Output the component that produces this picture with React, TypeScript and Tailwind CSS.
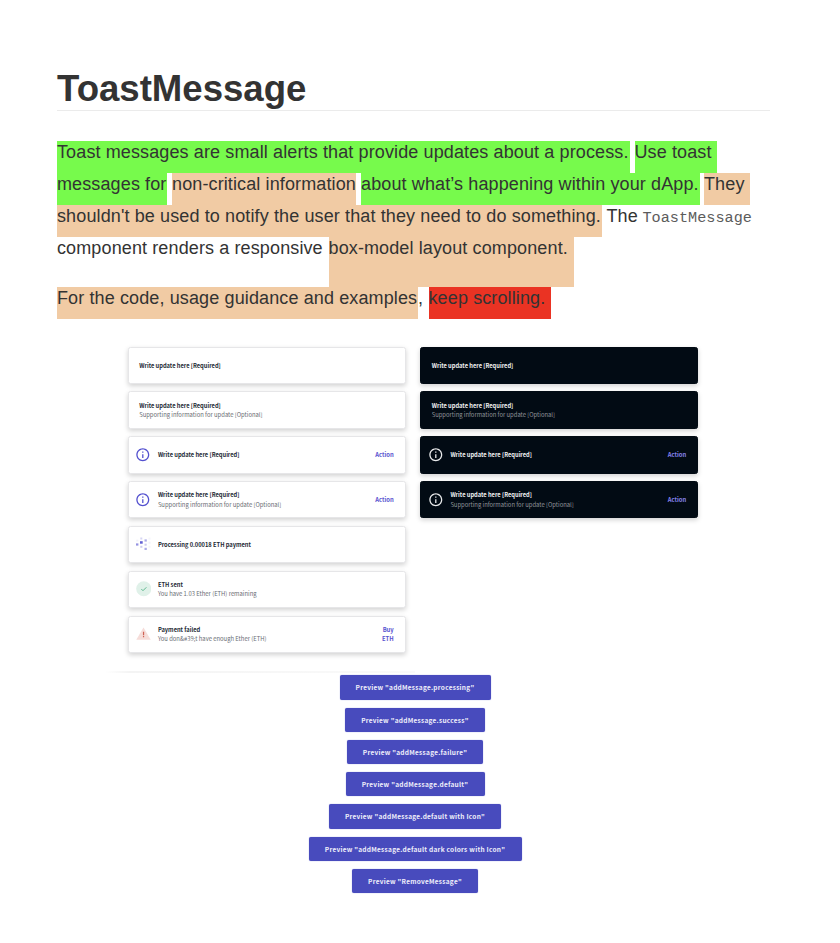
import type { ReactNode } from "react";

const GREEN = "bg-[#77fa4c]";
const PEACH = "bg-[#f1cba4]";
const RED = "bg-[#ea3323]";

function Mark({ children, className }: { children: ReactNode; className: string }) {
  return <span className={`block h-full shrink-0 whitespace-pre ${className}`}>{children}</span>;
}

function InfoIcon() {
  return (
    <svg viewBox="0 0 24 24" className="size-[15.600px] shrink-0 fill-current">
      <path d="M11 17h2v-6h-2v6zm1-15C6.480 2 2 6.480 2 12s4.480 10 10 10 10-4.480 10-10S17.520 2 12 2zm0 18c-4.410 0-8-3.590-8-8s3.590-8 8-8 8 3.590 8 8-3.590 8-8 8zM11 9h2V7h-2v2z" />
    </svg>
  );
}

function ProcessingIcon() {
  return (
    <svg viewBox="0 0 15 15" className="size-[15px] shrink-0" fill="#5a57d2">
      <rect x="0" y="6.400" width="2.400" height="2.200" opacity=".65" />
      <rect x="4" y="4.200" width="2.700" height="2.500" opacity=".95" />
      <rect x="8.500" y="2.400" width="2.300" height="2.200" opacity=".5" />
      <rect x="4.300" y="0.500" width="2" height="2" opacity=".25" />
      <rect x="8.500" y="6.700" width="2.200" height="2" opacity=".3" />
      <rect x="8.500" y="10.800" width="2.300" height="2.200" opacity=".5" />
      <rect x="4.300" y="8.800" width="2.100" height="2" opacity=".3" />
      <rect x="0.300" y="2.700" width="2" height="1.800" opacity=".08" />
      <rect x="12.500" y="0.600" width="2" height="2" opacity=".06" />
      <rect x="12.500" y="4.700" width="2" height="2" opacity=".08" />
      <rect x="12.500" y="8.800" width="2" height="2" opacity=".06" />
    </svg>
  );
}

function SuccessIcon() {
  return (
    <svg viewBox="0 0 16 16" className="mt-[-1px] size-[15.500px] shrink-0">
      <circle cx="8" cy="8" r="7.800" fill="#e0f1e9" />
      <path d="M5.500 8.300 7.200 10l3.500-3.500" fill="none" stroke="#5bb78b" strokeWidth="1" />
    </svg>
  );
}

function FailureIcon() {
  return (
    <svg viewBox="0 0 16 14" className="mt-[-2px] h-[13px] w-[15px] shrink-0">
      <path d="M8 0.500 15.800 13.700H.2z" fill="#f6ddd9" />
      <path d="M7.400 5h1.300v3.800H7.400zM7.400 9.700h1.300V11H7.400z" fill="#cf6153" />
    </svg>
  );
}

interface ToastProps {
  dark?: boolean;
  icon?: ReactNode;
  title: string;
  body?: string;
  action?: ReactNode;
}

function Toast({ dark, icon, title, body, action }: ToastProps) {
  const tone = dark
    ? "bg-[#020b14] border-[#020b14] text-[#f1f2f3]"
    : "bg-white border-[#e6e6e8] text-[#232934]";
  return (
    <div
      className={`flex h-[37.400px] w-[278px] items-center rounded-[2.500px] border pr-[11px] shadow-[0_2px_5px_rgba(0,0,0,0.18)] ${tone} ${icon ? "pl-[6.600px]" : "pl-[10.500px]"}`}
    >
      {icon && (
        <div className={`mr-[6.600px] flex w-4 shrink-0 justify-center ${dark ? "text-[#e9eaeb]" : "text-[#5350cf]"}`}>
          {icon}
        </div>
      )}
      <div className="flex-1 text-[5.870px] leading-[9.300px] whitespace-nowrap">
        <div className="text-[5.720px] font-bold"><span>{title}</span></div>
        {body && (
          <div className={dark ? "text-[#90949a]" : "text-[#6a6d73]"}><span>{body}</span></div>
        )}
      </div>
      {action && (
        <div className={`pt-[2px] text-right text-[5.850px] leading-[8.900px] font-bold ${dark ? "text-[#8583eb]" : "text-[#5753cf]"}`}>
          {action}
        </div>
      )}
    </div>
  );
}

const REQUIRED = "Write update here [Required]";
const OPTIONAL = "Supporting information for update [Optional]";

function BasicToasts({ dark }: { dark?: boolean }) {
  return (
    <>
      <Toast dark={dark} title={REQUIRED} />
      <Toast dark={dark} title={REQUIRED} body={OPTIONAL} />
      <Toast dark={dark} icon={<InfoIcon />} title={REQUIRED} action="Action" />
      <Toast dark={dark} icon={<InfoIcon />} title={REQUIRED} body={OPTIONAL} action="Action" />
    </>
  );
}

const BUTTONS = [
  { label: 'Preview "addMessage.processing"', width: "w-[151px]" },
  { label: 'Preview "addMessage.success"', width: "w-[140px]" },
  { label: 'Preview "addMessage.failure"', width: "w-[136.500px]" },
  { label: 'Preview "addMessage.default"', width: "w-[139px]" },
  { label: 'Preview "addMessage.default with Icon"', width: "w-[172.500px]" },
  { label: 'Preview "addMessage.default dark colors with Icon"', width: "w-[213px]" },
  { label: 'Preview "RemoveMessage"', width: "w-[126.500px]" },
];

export default function App() {
  return (
    <main className="h-[943px] w-[840px] overflow-hidden bg-white pt-[64px] font-['Liberation_Sans',Arial,sans-serif] text-[#333]">
      <h1 className="ml-[57px] h-[47px] w-[713px] border-b border-[#ebebeb] text-[36.600px] leading-[50px] font-bold whitespace-nowrap">
        <span>ToastMessage</span>
      </h1>

      <div className="mt-[29.500px] ml-[57px] w-[720px] text-[18px] leading-[23px] tracking-[0.120px] whitespace-nowrap">
        <div className="flex h-8">
          <Mark className={`w-[572.500px] ${GREEN}`}>Toast messages are small alerts that provide updates about a process.</Mark>
          <Mark className={`ml-[5px] w-[82px] ${GREEN}`}>Use toast</Mark>
        </div>
        <div className="flex h-8">
          <Mark className={`w-[110px] ${GREEN}`}>messages for</Mark>
          <Mark className={`ml-[5px] w-[184px] ${PEACH}`}>non-critical information</Mark>
          <Mark className={`ml-[5px] w-[338.500px] ${GREEN}`}>about what’s happening within your dApp.</Mark>
          <Mark className={`ml-[4.500px] w-[46px] ${PEACH}`}>They</Mark>
        </div>
        <div className="flex h-[32.500px]">
          <Mark className={`w-[544.500px] ${PEACH}`}>shouldn't be used to notify the user that they need to do something.</Mark>
          <Mark className="ml-[5px] w-[36px]">The</Mark>
          <Mark className="pt-[2px] font-['Liberation_Mono',monospace] text-[15.200px] tracking-normal text-[#5c5c5c]">ToastMessage</Mark>
        </div>
        <div className="flex h-[50px]">
          <Mark className="w-[271.500px]">component renders a responsive</Mark>
          <Mark className={`w-[245px] ${PEACH}`}>box-model layout component.</Mark>
        </div>
        <div className="flex h-8">
          <Mark className={`w-[361px] ${PEACH}`}>For the code, usage guidance and examples</Mark>
          <Mark className="w-[10.500px]">,</Mark>
          <Mark className={`w-[122px] ${RED}`}>keep scrolling.</Mark>
        </div>
      </div>

      <div className="font-['Noto_Sans_CJK_JP','Noto_Sans_CJK_SC',sans-serif]">
        <section className="mt-[27.500px] ml-[127.700px] flex h-[324.500px] gap-[14.500px]">
          <div className="flex flex-col gap-[7.460px]">
            <BasicToasts />
            <Toast icon={<ProcessingIcon />} title="Processing 0.00018 ETH payment" />
            <Toast icon={<SuccessIcon />} title="ETH sent" body="You have 1.03 Ether (ETH) remaining" />
            <Toast
              icon={<FailureIcon />}
              title="Payment failed"
              body="You don&amp;#39;t have enough Ether (ETH)"
              action={<>Buy<br />ETH</>}
            />
          </div>
          <div className="flex flex-col gap-[7.460px]">
            <BasicToasts dark />
          </div>
        </section>
        <div className="ml-[105px] h-[2px] w-[310px] bg-linear-to-r from-transparent via-[#f4f4f4] via-8% to-[#fafafa]" />
        <section className="mt-[2.400px] ml-[308.500px] flex w-[213px] flex-col items-center gap-[8.050px]">
          {BUTTONS.map(({ label, width }) => (
            <button
              key={label}
              className={`h-[24.200px] ${width} rounded-[2px] bg-[#484bbd] text-[6.500px] leading-[24px] font-bold tracking-[0.260px] whitespace-nowrap text-[#eeeefa] shadow-[0_0_1px_#7678cf]`}
            >
              <span>{label}</span>
            </button>
          ))}
        </section>
      </div>
    </main>
  );
}
